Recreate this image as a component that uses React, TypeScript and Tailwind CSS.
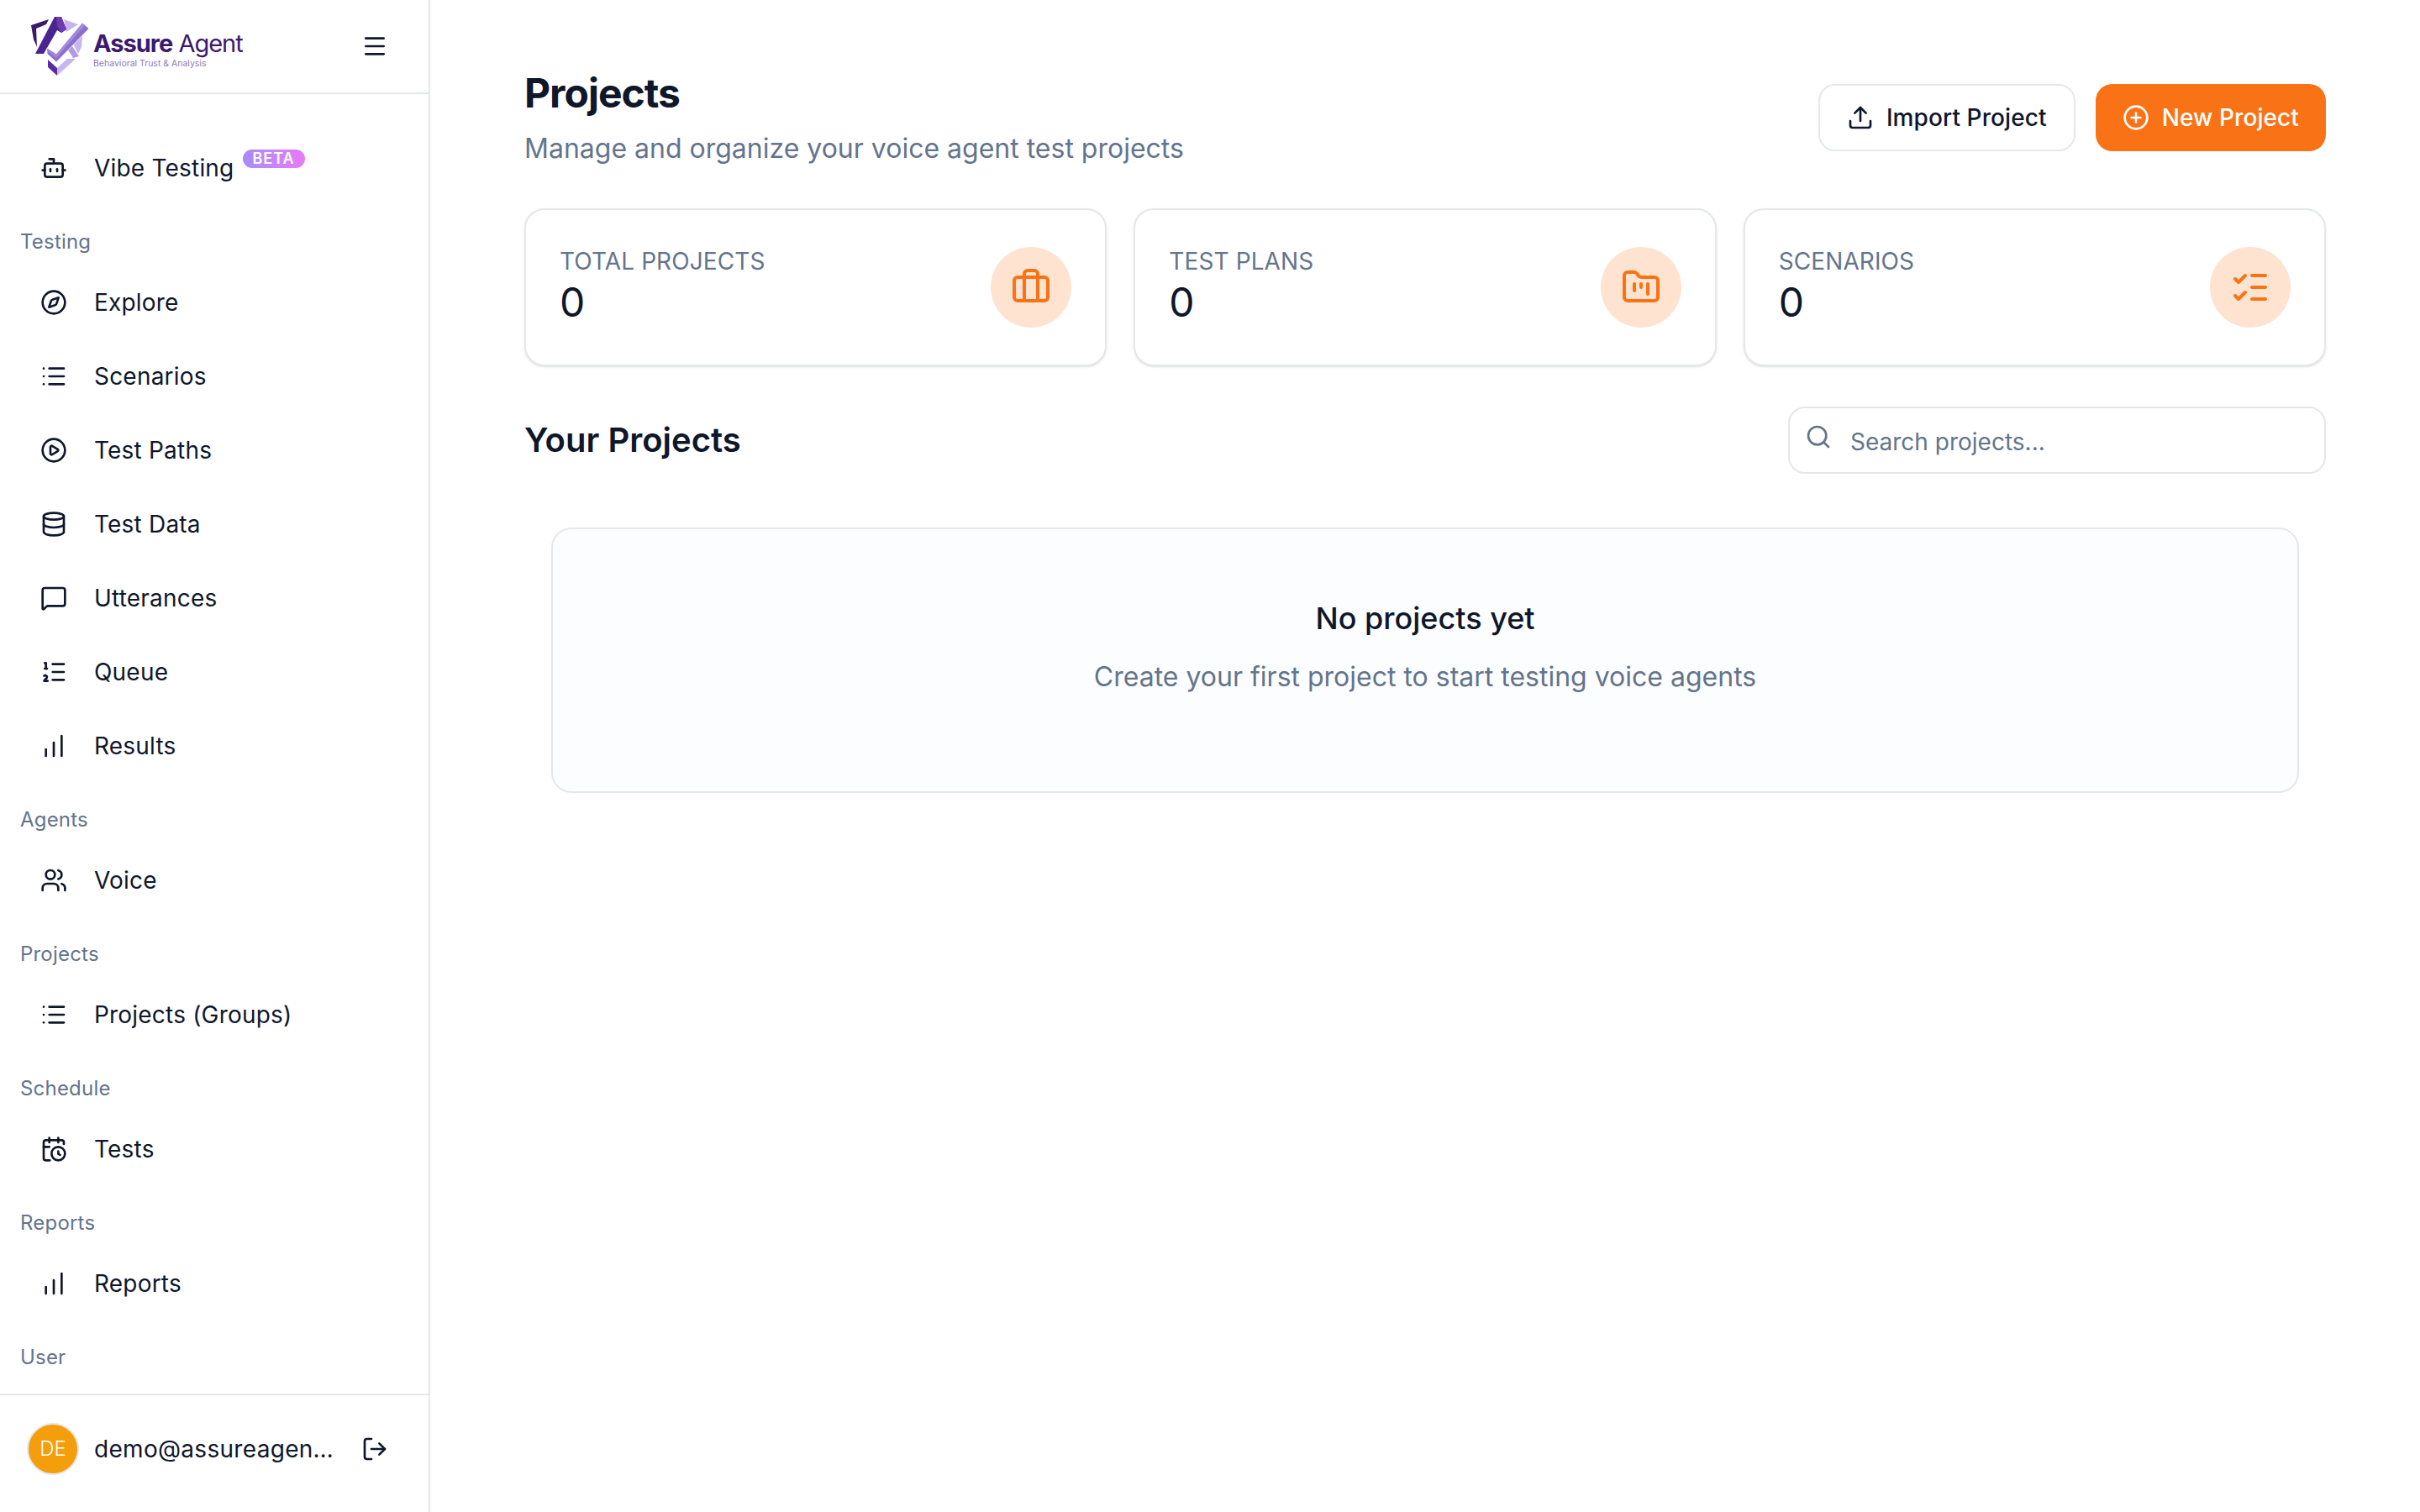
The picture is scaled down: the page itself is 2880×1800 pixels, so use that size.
import {
  Bot,
  Briefcase,
  CalendarClock,
  ChartNoAxesColumnIncreasing,
  CirclePlay,
  CirclePlus,
  Compass,
  Database,
  FolderKanban,
  List,
  ListChecks,
  ListOrdered,
  LogOut,
  Menu,
  MessageSquare,
  Search,
  Upload,
  Users,
} from "lucide-react"
import type { ComponentType, ReactNode } from "react"

type IconType = ComponentType<{ size?: number; className?: string }>

function LogoMark() {
  return (
    <svg viewBox="0 0 84 84" className="w-[84px] h-[84px] shrink-0">
      {/* left shield */}
      <polygon points="7,16 28,9 25,15 13,20 14,42 10,33" fill="#3b1a6e" />
      {/* right shield */}
      <polygon points="46,9 63,15 49,24" fill="#c6b4f3" />
      <polygon points="68,28 67,42 63,50 57,38" fill="#c6b4f3" />
      {/* A */}
      <polygon points="35,6 43,6 49,21 43,25 38,22 22,50 12,50" fill="#4a2490" />
      <polygon points="37,6 43,6 49,21 43,25 38,17" fill="#6d3bb0" />
      <polygon points="54,38 64,53 57,55 50,44" fill="#b39ae8" />
      {/* bottom chevron */}
      <polygon points="27,57 38,67 38,76 27,66" fill="#5a2ca0" />
      <polygon points="38,67 50,56 60,56 38,76" fill="#c6b4f3" />
      {/* check */}
      <polygon points="26,43 37,50 68,13 76,20 37,60 26,50" fill="#8b6fcb" stroke="#ffffff" strokeWidth="0.8" />
      <polygon points="26,44 37,51 68,14 71,16 37,55 26,46" fill="#a48ade" />
    </svg>
  )
}

function Logo() {
  return (
    <div className="flex items-center w-[262px] -ml-[2px] pt-[2px]">
      <LogoMark />
      <div className="flex flex-col -ml-[3px] pt-[4px]">
        <div className="text-[#3b1a6e] text-[29px] leading-[36px] tracking-[-1px] whitespace-nowrap">
          <span className="font-bold">Assure</span> <span className="font-normal">Agent</span>
        </div>
        <div className="text-[#8f7bb8] text-[10.5px] leading-[12px] whitespace-nowrap">
          Behavioral Trust &amp; Analysis
        </div>
      </div>
    </div>
  )
}

function NavItem({ icon: Icon, label, badge }: { icon: IconType; label: string; badge?: ReactNode }) {
  return (
    <div className="h-[88px] shrink-0 flex items-center pl-[48px] gap-[32px] text-[#0f172a]">
      <Icon size={32} className="shrink-0" />
      <span className="text-[28px] leading-[40px] tracking-[0.2px] whitespace-nowrap">{label}</span>
      {badge}
    </div>
  )
}

function SectionLabel({ children }: { children: ReactNode }) {
  return (
    <div className="h-[72px] shrink-0 pt-[28px] pl-[24px] text-[24px] leading-[32px] tracking-[0.2px] text-[#64748b]">
      {children}
    </div>
  )
}

function Sidebar() {
  return (
    <aside className="w-[512px] h-[1800px] shrink-0 border-r-2 border-[#e5e7eb] flex flex-col bg-white">
      <div className="h-[112px] shrink-0 border-b-2 border-[#e5e7eb] flex items-center justify-between pl-[32px] pr-[48px]">
        <Logo />
        <Menu size={32} className="text-[#0f172a]" />
      </div>

      <nav className="flex-1 flex flex-col pt-[44px] overflow-hidden">
        <NavItem
          icon={Bot}
          label="Vibe Testing"
          badge={
            <span className="-ml-[22px] -mt-[22px] h-[22px] px-[12px] rounded-full bg-gradient-to-r from-[#a78bfa] to-[#e879f9] text-white text-[18px] leading-[22px] font-semibold tracking-[1px]">
              BETA
            </span>
          }
        />
        <SectionLabel>Testing</SectionLabel>
        <NavItem icon={Compass} label="Explore" />
        <NavItem icon={List} label="Scenarios" />
        <NavItem icon={CirclePlay} label="Test Paths" />
        <NavItem icon={Database} label="Test Data" />
        <NavItem icon={MessageSquare} label="Utterances" />
        <NavItem icon={ListOrdered} label="Queue" />
        <NavItem icon={ChartNoAxesColumnIncreasing} label="Results" />
        <SectionLabel>Agents</SectionLabel>
        <NavItem icon={Users} label="Voice" />
        <SectionLabel>Projects</SectionLabel>
        <NavItem icon={List} label="Projects (Groups)" />
        <SectionLabel>Schedule</SectionLabel>
        <NavItem icon={CalendarClock} label="Tests" />
        <SectionLabel>Reports</SectionLabel>
        <NavItem icon={ChartNoAxesColumnIncreasing} label="Reports" />
        <SectionLabel>User</SectionLabel>
      </nav>

      <div className="h-[141px] shrink-0 border-t-2 border-[#e5e7eb] flex items-center pl-[32px] pr-[48px] pb-[12px]">
        <div className="w-[62px] h-[62px] rounded-full bg-[#f59e0b] border-2 border-[#e5e7eb] flex items-center justify-center text-white text-[24px] font-light shrink-0">
          DE
        </div>
        <span className="ml-[18px] w-[290px] text-[28px] leading-[40px] tracking-[0.3px] text-[#0f172a] truncate">
          demo@assureagent.com
        </span>
        <LogOut size={32} className="ml-auto text-[#0f172a]" />
      </div>
    </aside>
  )
}

function StatCard({ label, icon: Icon }: { label: string; icon: IconType }) {
  return (
    <div className="flex-1 h-[188px] rounded-3xl border-2 border-[#e5e7eb] bg-white shadow-sm flex items-center justify-between px-[40px]">
      <div className="flex flex-col -mt-[5px]">
        <span className="text-[28px] leading-[40px] tracking-[0.1px] text-[#64748b] uppercase">{label}</span>
        <span className="mt-[1px] text-[48px] leading-[56px] text-[#0f172a]">0</span>
      </div>
      <div className="w-[96px] h-[96px] rounded-full bg-[#fee3d0] flex items-center justify-center">
        <Icon size={48} className="text-[#f97316]" />
      </div>
    </div>
  )
}

export default function App() {
  return (
    <div className="w-[2880px] h-[1800px] flex bg-white overflow-hidden font-['Inter',sans-serif]">
      <Sidebar />

      <main className="flex-1 px-[112px] pt-[80px]">
        {/* Page header */}
        <div className="h-[120px] flex items-center justify-between">
          <div>
            <h1 className="text-[48px] leading-[60px] font-bold text-[#0f172a] tracking-[-1px]">Projects</h1>
            <p className="mt-[14px] text-[32px] leading-[44px] text-[#64748b]">
              Manage and organize your voice agent test projects
            </p>
          </div>
          <div className="flex items-center gap-[24px]">
            <button className="h-[80px] px-[32px] rounded-[20px] border-2 border-[#e5e7eb] bg-white flex items-center gap-[15px] text-[28px] tracking-[0.1px] font-medium text-[#0f172a]">
              <Upload size={32} />
              Import Project
            </button>
            <button className="h-[80px] px-[32px] rounded-[20px] bg-[#f97316] flex items-center gap-[15px] text-[28px] tracking-[0.1px] font-medium text-white">
              <CirclePlus size={32} />
              New Project
            </button>
          </div>
        </div>

        {/* Stats */}
        <div className="mt-[48px] flex gap-[32px]">
          <StatCard label="Total Projects" icon={Briefcase} />
          <StatCard label="Test Plans" icon={FolderKanban} />
          <StatCard label="Scenarios" icon={ListChecks} />
        </div>

        {/* Your projects */}
        <div className="mt-[48px] h-[80px] flex items-center justify-between">
          <h2 className="text-[40px] leading-[56px] font-semibold text-[#0f172a]">Your Projects</h2>
          <div className="relative w-[640px] h-[80px]">
            <Search size={32} className="absolute left-[20px] top-[20px] text-[#64748b]" />
            <input
              placeholder="Search projects..."
              className="w-full h-full rounded-[20px] border-2 border-[#e5e7eb] bg-white pl-[72px] pr-[24px] pt-[3px] text-[28px] outline-none placeholder:text-[#64748b]"
            />
          </div>
        </div>

        <div className="mt-[64px] mx-[32px] h-[316px] rounded-3xl border-2 border-[#e5e7eb] bg-[#fcfdfe] flex flex-col items-center justify-center pb-[32px]">
          <h3 className="text-[36px] leading-[48px] font-medium text-[#0f172a]">No projects yet</h3>
          <p className="mt-[24px] text-[32px] leading-[44px] text-[#64748b]">
            Create your first project to start testing voice agents
          </p>
        </div>
      </main>
    </div>
  )
}
